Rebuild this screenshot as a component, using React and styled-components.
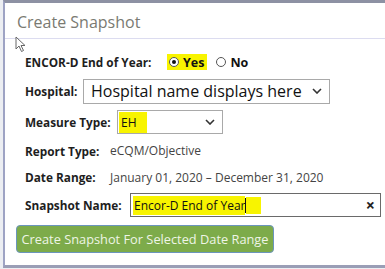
import React from "react";
import styled, { createGlobalStyle } from "styled-components";

const Global = createGlobalStyle`
  html, body { margin: 0; padding: 0; background: #eceef2; }
  body { font-family: "Open Sans", "DejaVu Sans", sans-serif; width: 385px; height: 269px; overflow: hidden; }
`;

const Dialog = styled.div`
  position: relative;
  margin-left: 3px;
  width: 382px;
  height: 262px;
  background: #fff;
  border-left: 2px solid #9ea3c4;
  border-top: 3px solid #8d91a3;
  border-bottom: 3px solid #9a9eb6;
`;

const Header = styled.div`
  height: 35px;
  display: flex;
  align-items: center;
  padding-left: 12px;
  border-bottom: 1px solid #dcdcf0;
`;

const Title = styled.div`
  font-size: 16px;
  color: #7a7a72;
  padding-top: 2px;
`;

const Body = styled.div`
  padding: 10px 0 0 20px;
  display: flex;
  flex-direction: column;
`;

const Row = styled.div`
  display: flex;
  align-items: center;
  height: ${(p) => p.$h}px;
`;

const Label = styled.div`
  font-weight: 700;
  font-size: 11.8px;
  color: #1e1e1e;
  width: ${(p) => p.$w}px;
  flex: none;
  white-space: nowrap;
`;

const Value = styled.div`
  font-size: 12px;
  color: #444;
  white-space: nowrap;
`;

const RadioGroup = styled.div`
  display: flex;
  align-items: center;
  gap: 7px;
`;

const RadioOption = styled.div`
  display: flex;
  align-items: center;
  gap: 4px;
  height: 16px;
  padding: 0 3px 0 2px;
  background: ${(p) => (p.$hl ? "#f8f400" : "transparent")};
  font-weight: 700;
  font-size: 12.5px;
  color: #111;
`;

const Circle = styled.span`
  width: 10px;
  height: 10px;
  border-radius: 50%;
  border: 1px solid #555;
  background: #fff;
  display: flex;
  align-items: center;
  justify-content: center;
  box-sizing: border-box;
  &::after {
    content: "";
    width: 4px;
    height: 4px;
    border-radius: 50%;
    background: ${(p) => (p.$on ? "#111" : "transparent")};
  }
`;

const Select = styled.div`
  width: ${(p) => p.$w}px;
  height: ${(p) => p.$hgt}px;
  box-sizing: border-box;
  border: 1px solid #a9a9a9;
  display: flex;
  align-items: center;
  background: #fff;
`;

const SelectText = styled.div`
  flex: 1;
  overflow: hidden;
  white-space: nowrap;
  font-size: ${(p) => p.$fs}px;
  color: #111;
  padding-left: ${(p) => p.$pl}px;
`;

const Highlight = styled.span`
  background: #f8f400;
  display: inline-block;
  padding: ${(p) => p.$pad};
`;

const Chevron = styled.svg`
  width: 10px;
  height: 6px;
  margin: 0 7px 0 6px;
  flex: none;
`;

const Input = styled.div`
  width: 251px;
  height: 24px;
  box-sizing: border-box;
  border: 1px solid #6a6a6a;
  display: flex;
  align-items: center;
  padding-left: 2px;
  background: #fff;
`;

const InputText = styled.div`
  flex: 1;
  font-size: 12px;
  color: #111;
  display: flex;
  align-items: center;
`;

const Caret = styled.span`
  width: 1px;
  height: 15px;
  background: #111;
`;

const Tail = styled.span`
  width: 15px;
  height: 17px;
  background: #f8f400;
`;

const Clear = styled.span`
  font-size: 16px;
  font-weight: 700;
  color: #222;
  margin-right: 5px;
`;

const Button = styled.button`
  margin-left: -9px;
  margin-top: 5px;
  width: 258px;
  height: 28px;
  background: #7dab4a;
  border: 1.5px solid #6b95bd;
  border-radius: 4px;
  color: #eef5e6;
  font-family: "Open Sans", sans-serif;
  font-size: 12.8px;
  padding: 0;
  text-align: center;
`;

const Pointer = styled.svg`
  position: absolute;
  left: 10px;
  top: 33px;
  width: 12px;
  height: 17px;
`;

const ChevronIcon = () => (
  <Chevron viewBox="0 0 10 6">
    <polyline points="1,1 5,5 9,1" fill="none" stroke="#333" strokeWidth="1.6" />
  </Chevron>
);

export default function App() {
  return (
    <>
      <Global />
      <Dialog>
        <Header>
          <Title>Create Snapshot</Title>
        </Header>
        <Pointer viewBox="0 0 12 17">
          <path d="M1 1 L1 13 L4 10 L6.5 15.5 L8.5 14.5 L6 9.5 L10 9.5 Z" fill="#fff" stroke="#666" strokeWidth="1" />
        </Pointer>
        <Body>
          <Row $h={26}>
            <Label $w={142}>ENCOR-D End of Year:</Label>
            <RadioGroup>
              <RadioOption $hl>
                <Circle $on />
                Yes
              </RadioOption>
              <RadioOption>
                <Circle />
                No
              </RadioOption>
            </RadioGroup>
          </Row>
          <Row $h={32}>
            <Label $w={58}>Hospital:</Label>
            <Select $w={247} $hgt={25}>
              <SelectText $fs={16} $pl={7}>Hospital name displays here</SelectText>
              <ChevronIcon />
            </Select>
          </Row>
          <Row $h={30}>
            <Label $w={92}>Measure Type:</Label>
            <Select $w={106} $hgt={24}>
              <SelectText $fs={12} $pl={1}>
                <Highlight $pad="2px 10px 2px 2px">EH</Highlight>
              </SelectText>
              <ChevronIcon />
            </Select>
          </Row>
          <Row $h={27}>
            <Label $w={85}>Report Type:</Label>
            <Value>eCQM/Objective</Value>
          </Row>
          <Row $h={26}>
            <Label $w={85}>Date Range:</Label>
            <Value>January 01, 2020 – December 31, 2020</Value>
          </Row>
          <Row $h={30}>
            <Label $w={105}>Snapshot Name:</Label>
            <Input>
              <InputText>
                <Highlight $pad="1px 0 1px 1px">Encor-D End of Year</Highlight>
                <Caret />
                <Tail />
              </InputText>
              <Clear>×</Clear>
            </Input>
          </Row>
          <Row $h={33}>
            <Button>Create Snapshot For Selected Date Range</Button>
          </Row>
        </Body>
      </Dialog>
    </>
  );
}
